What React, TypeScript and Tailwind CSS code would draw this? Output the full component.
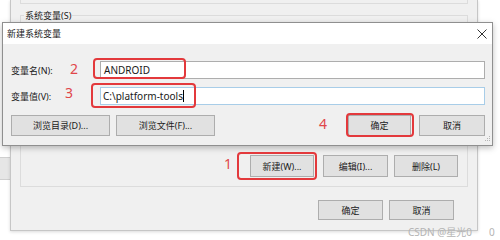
import React from "react";

const font = { fontFamily: '"Noto Sans", "Noto Sans CJK SC", sans-serif' };

const Btn: React.FC<{ label: string; className?: string }> = ({ label, className }) => (
  <div
    className={
      "flex items-center justify-center bg-[#e1e1e1] border border-[#adadad] text-[9px] leading-none text-[#1a1a1a] " +
      (className || "")
    }
  >
    {label}
  </div>
);

const Mark: React.FC<{ className: string }> = ({ className }) => (
  <div className={"absolute border-2 border-[#e3393c] rounded-[4px] " + className} />
);

const Num: React.FC<{ n: string; className: string }> = ({ n, className }) => (
  <span className={"absolute text-[14px] leading-none text-[#e0464a] " + className}>{n}</span>
);

export default function App() {
  return (
    <div className="relative w-[500px] h-[240px] bg-white overflow-hidden" style={font}>
      {/* window further behind, left edge */}
      <div className="absolute left-0 top-[157px] w-[10px] h-[23px] bg-[#e6e6e6] border-y border-[#cfcfcf]" />

      {/* 环境变量 window (behind) */}
      <div className="absolute left-[10px] top-0 w-[468px] h-[231px] bg-[#f0f0f0] border-x border-b border-[#c6c6c6] shadow-[0_1px_3px_rgba(0,0,0,0.15)] flex flex-col">
        <div className="mx-[9px] h-[4px] border-x border-b border-[#dcdcdc]" />
        <div className="relative mx-[9px] mt-[11px] h-[172px] border border-[#dcdcdc] flex flex-col justify-end pb-[9px] pr-[9px]">
          <span className="absolute -top-[6px] left-[3px] bg-[#f0f0f0] px-[1px] text-[9px] leading-[11px] text-[#1a1a1a]">
            系统变量(S)
          </span>
          <div className="flex justify-end">
            <Btn label="新建(W)..." className="w-[64px] h-[22px]" />
            <Btn label="编辑(I)..." className="w-[65px] h-[22px] ml-[9px]" />
            <Btn label="删除(L)" className="w-[64px] h-[22px] ml-[6px]" />
          </div>
        </div>
        <div className="flex justify-end mt-[13px] pr-[23px]">
          <Btn label="确定" className="w-[65px] h-[20px]" />
          <Btn label="取消" className="w-[65px] h-[20px] ml-[6px]" />
        </div>
      </div>

      {/* 新建系统变量 dialog */}
      <div className="absolute left-[2px] top-[22px] w-[491px] h-[124px] border border-[#8f8f8f] bg-[#f0f0f0] shadow-[0_2px_6px_rgba(0,0,0,0.25)] flex flex-col">
        <div className="h-[21px] bg-white flex items-center justify-between pl-[4px] pr-[5px]">
          <span className="text-[9px] leading-none text-[#1a1a1a]">新建系统变量</span>
          <svg width="10" height="10" viewBox="0 0 10 10">
            <path d="M0.5 0.5 L9.5 9.5 M9.5 0.5 L0.5 9.5" stroke="#333" strokeWidth="1" />
          </svg>
        </div>
        <div className="relative flex-1 flex flex-col pt-[17px] pl-[8px] pr-[7px]">
          <div className="flex items-center h-[18px]">
            <span className="w-[89px] text-[9px] leading-none text-[#1a1a1a]">变量名(N):</span>
            <div className="flex-1 h-[18px] bg-white border border-[#adadad] flex items-center pl-[3px] text-[10px] leading-none text-[#1a1a1a]">
              ANDROID
            </div>
          </div>
          <div className="flex items-center h-[18px] mt-[8px]">
            <span className="w-[89px] text-[9px] leading-none text-[#1a1a1a]">变量值(V):</span>
            <div className="flex-1 h-[18px] bg-white border border-[#a8cde8] flex items-center pl-[2px] text-[10px] leading-none text-[#1a1a1a]">
              C:\platform-tools
              <span className="w-px h-[12px] bg-black" />
            </div>
          </div>
          <div className="flex items-center mt-[10px]">
            <Btn label="浏览目录(D)..." className="w-[99px] h-[21px]" />
            <Btn label="浏览文件(F)..." className="w-[99px] h-[21px] ml-[6px]" />
            <div className="flex-1" />
            <Btn label="确定" className="w-[63px] h-[21px]" />
            <Btn label="取消" className="w-[66px] h-[21px] ml-[8px]" />
          </div>
          <svg className="absolute right-[1px] bottom-[1px]" width="8" height="8" viewBox="0 0 8 8">
            <rect x="6" y="0" width="1" height="1" fill="#b5b5b5" />
            <rect x="4" y="2" width="1" height="1" fill="#b5b5b5" />
            <rect x="6" y="2" width="1" height="1" fill="#b5b5b5" />
            <rect x="2" y="4" width="1" height="1" fill="#b5b5b5" />
            <rect x="4" y="4" width="1" height="1" fill="#b5b5b5" />
            <rect x="6" y="4" width="1" height="1" fill="#b5b5b5" />
          </svg>
        </div>
      </div>

      {/* red annotations */}
      <Mark className="left-[93px] top-[58px] w-[93px] h-[21px]" />
      <Mark className="left-[91px] top-[83px] w-[105px] h-[25px]" />
      <Mark className="left-[346px] top-[113px] w-[68px] h-[24px]" />
      <Mark className="left-[237px] top-[152px] w-[80px] h-[28px]" />
      <Num n="2" className="left-[70px] top-[62px]" />
      <Num n="3" className="left-[65px] top-[86px]" />
      <Num n="4" className="left-[319px] top-[117px]" />
      <Num n="1" className="left-[224px] top-[157px]" />

      {/* watermark */}
      <span className="absolute left-[408px] top-[227px] text-[10px] leading-none text-[#b4b4b4]">
        CSDN @星光0
      </span>
      <span className="absolute left-[489px] top-[227px] text-[10px] leading-none text-[#b4b4b4]">0</span>
    </div>
  );
}
